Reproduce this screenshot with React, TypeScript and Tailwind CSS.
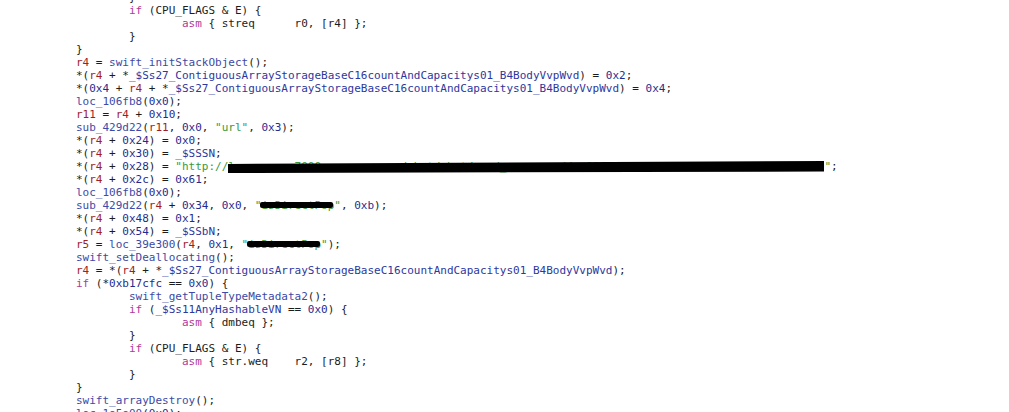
import React from 'react'

type Seg = [string, string]

const cls: Record<string, string> = {
  k: 'text-[#b0399c]',
  f: 'text-[#3d4aa6]',
  s: 'text-[#2d379e]',
  r: 'text-[#a11c25]',
  n: 'text-[#1f2b8f]',
  t: 'text-[#3a9a3c]',
  p: 'text-[#1c1c1c]',
}

const SYM = '_$Ss27_ContiguousArrayStorageBaseC16countAndCapacitys01_B4BodyVvpWvd'
const URL_HIDDEN = 'lxxxxxxxx-7000.xxxxxyy.com/chat/chat/prod_server-sdd-x0000x0x0x0-x0x0x0x0x0x0x0-x0x0x0x0x0'

// [indent, segments]; 'R' / 'U' mark redacted strings
const lines: [number, Seg[]][] = [
  [2, [['p', '}']]],
  [2, [['k', 'if'], ['p', ' (CPU_FLAGS & E) {']]],
  [3, [['k', 'asm'], ['p', ' { streq      r0, [r4] };']]],
  [2, [['p', '}']]],
  [1, [['p', '}']]],
  [1, [['r', 'r4'], ['p', ' = '], ['f', 'swift_initStackObject'], ['p', '();']]],
  [1, [['p', '*('], ['r', 'r4'], ['p', ' + *'], ['s', SYM], ['p', ') = '], ['n', '0x2'], ['p', ';']]],
  [1, [['p', '*('], ['n', '0x4'], ['p', ' + '], ['r', 'r4'], ['p', ' + *'], ['s', SYM], ['p', ') = '], ['n', '0x4'], ['p', ';']]],
  [1, [['f', 'loc_106fb8'], ['p', '('], ['n', '0x0'], ['p', ');']]],
  [1, [['r', 'r11'], ['p', ' = '], ['r', 'r4'], ['p', ' + '], ['n', '0x10'], ['p', ';']]],
  [1, [['f', 'sub_429d22'], ['p', '('], ['r', 'r11'], ['p', ', '], ['n', '0x0'], ['p', ', '], ['t', '"url"'], ['p', ', '], ['n', '0x3'], ['p', ');']]],
  [1, [['p', '*('], ['r', 'r4'], ['p', ' + '], ['n', '0x24'], ['p', ') = '], ['n', '0x0'], ['p', ';']]],
  [1, [['p', '*('], ['r', 'r4'], ['p', ' + '], ['n', '0x30'], ['p', ') = '], ['s', '_$SSSN'], ['p', ';']]],
  [1, [['p', '*('], ['r', 'r4'], ['p', ' + '], ['n', '0x28'], ['p', ') = '], ['t', '"http://'], ['U', URL_HIDDEN], ['t', '"'], ['p', ';']]],
  [1, [['p', '*('], ['r', 'r4'], ['p', ' + '], ['n', '0x2c'], ['p', ') = '], ['n', '0x61'], ['p', ';']]],
  [1, [['f', 'loc_106fb8'], ['p', '('], ['n', '0x0'], ['p', ');']]],
  [1, [['f', 'sub_429d22'], ['p', '('], ['r', 'r4'], ['p', ' + '], ['n', '0x34'], ['p', ', '], ['n', '0x0'], ['p', ', '], ['t', '"'], ['R', 'isDirectPop'], ['t', '"'], ['p', ', '], ['n', '0xb'], ['p', ');']]],
  [1, [['p', '*('], ['r', 'r4'], ['p', ' + '], ['n', '0x48'], ['p', ') = '], ['n', '0x1'], ['p', ';']]],
  [1, [['p', '*('], ['r', 'r4'], ['p', ' + '], ['n', '0x54'], ['p', ') = '], ['s', '_$SSbN'], ['p', ';']]],
  [1, [['r', 'r5'], ['p', ' = '], ['f', 'loc_39e300'], ['p', '('], ['r', 'r4'], ['p', ', '], ['n', '0x1'], ['p', ', '], ['t', '"'], ['R', 'isDirectPop'], ['t', '"'], ['p', ');']]],
  [1, [['f', 'swift_setDeallocating'], ['p', '();']]],
  [1, [['r', 'r4'], ['p', ' = *('], ['r', 'r4'], ['p', ' + *'], ['s', SYM], ['p', ');']]],
  [1, [['k', 'if'], ['p', ' (*'], ['n', '0xb17cfc'], ['p', ' == '], ['n', '0x0'], ['p', ') {']]],
  [2, [['f', 'swift_getTupleTypeMetadata2'], ['p', '();']]],
  [2, [['k', 'if'], ['p', ' ('], ['s', '_$Ss11AnyHashableVN'], ['p', ' == '], ['n', '0x0'], ['p', ') {']]],
  [3, [['k', 'asm'], ['p', ' { dmbeq };']]],
  [2, [['p', '}']]],
  [2, [['k', 'if'], ['p', ' (CPU_FLAGS & E) {']]],
  [3, [['k', 'asm'], ['p', ' { str.weq    r2, [r8] };']]],
  [2, [['p', '}']]],
  [1, [['p', '}']]],
  [1, [['f', 'swift_arrayDestroy'], ['p', '();']]],
  [1, [['f', 'loc_1e5e00'], ['p', '('], ['n', '0x0'], ['p', ');']]],
]

function Segment({ seg }: { seg: Seg }) {
  const [kind, text] = seg
  if (kind === 'R') {
    return (
      <span className="relative text-[#3a9a3c]">
        {text}
        <span className="absolute left-[-1px] right-[1px] top-[3px] h-[6px] rounded-[2px] bg-black" />
      </span>
    )
  }
  if (kind === 'U') {
    return (
      <span className="relative text-[#3a9a3c]">
        {text}
        <svg className="absolute left-0 top-0 h-[13px] w-full" viewBox="0 0 100 13" preserveAspectRatio="none">
          <polygon points="0,4 100,1 100,11.5 0,13" fill="#000" />
        </svg>
      </span>
    )
  }
  return <span className={cls[kind]}>{text}</span>
}

export default function App() {
  return (
    <div className="h-[412px] w-[1009px] overflow-hidden bg-white">
      <div className="mt-[-9px] pl-[23px] font-['DejaVu_Sans_Mono',monospace] text-[11px] leading-[13px] whitespace-pre">
        {lines.map(([indent, segs], i) => (
          <div key={i} className="h-[13px]">
            {' '.repeat(indent * 8)}
            {segs.map((s, j) => (
              <Segment key={j} seg={s} />
            ))}
          </div>
        ))}
      </div>
    </div>
  )
}
